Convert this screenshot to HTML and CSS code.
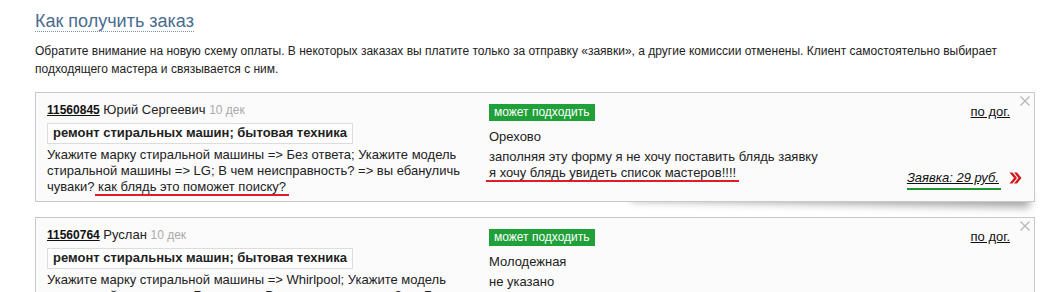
FILE: index.html
```html
<!DOCTYPE HTML>
<html lang="ru">
<head>
    <meta http-equiv="content-type" content="text/html; charset=utf-8">
    <title>Как получить заказ</title>
    <link rel="stylesheet" href="styles.css">
</head>
<body>
    <div class="page">
        <h1 class="title"><span class="title__text">Как получить заказ</span></h1>
        <p class="intro">Обратите внимание на новую схему оплаты. В некоторых заказах вы платите только за отправку «заявки», а другие комиссии отменены. Клиент самостоятельно выбирает подходящего мастера и связывается с ним.</p>

        <div class="order">
            <div class="order__main">
                <div class="order__head"><a class="order__id" href="#">11560845</a> Юрий Сергеевич <span class="order__date">10 дек</span></div>
                <div class="order__cat">ремонт стиральных машин; бытовая техника</div>
                <div class="order__desc">Укажите марку стиральной машины =&gt; Без ответа; Укажите модель стиральной машины =&gt; LG; В чем неисправность? =&gt; вы ебануличь чуваки? <span class="mark">как блядь это поможет поиску?</span></div>
            </div>
            <div class="order__info">
                <span class="badge">может подходить</span>
                <div class="order__place">Орехово</div>
                <div class="order__note">заполняя эту форму я не хочу поставить блядь заявку<br><span class="mark">я хочу блядь увидеть список мастеров!!!!</span></div>
            </div>
            <div class="order__side">
                <a class="order__price" href="#">по дог.</a>
                <div class="order__bid">
                    <a class="order__bid-link" href="#">Заявка: 29 руб.</a>
                    <svg class="chevron" width="13" height="12" viewBox="0 0 13 12"><path d="M0.5 0.5 L5 6 L0.5 11.5 L3.5 11.5 L8 6 L3.5 0.5 Z M5 0.5 L9.5 6 L5 11.5 L8 11.5 L12.5 6 L8 0.5 Z" fill="#d4161b"/></svg>
                </div>
            </div>
            <svg class="order__close" width="10" height="10" viewBox="0 0 10 10"><path d="M0.5 0.5 L9.5 9.5 M9.5 0.5 L0.5 9.5" stroke="#b4b4b4" stroke-width="1.2"/></svg>
        </div>

        <div class="order">
            <div class="order__main">
                <div class="order__head"><a class="order__id" href="#">11560764</a> Руслан <span class="order__date">10 дек</span></div>
                <div class="order__cat">ремонт стиральных машин; бытовая техника</div>
                <div class="order__desc">Укажите марку стиральной машины =&gt; Whirlpool; Укажите модель стиральной машины =&gt; Без ответа; В чем неисправность? =&gt; Без ответа</div>
            </div>
            <div class="order__info">
                <span class="badge">может подходить</span>
                <div class="order__place">Молодежная</div>
                <div class="order__note">не указано</div>
            </div>
            <div class="order__side">
                <a class="order__price" href="#">по дог.</a>
            </div>
            <svg class="order__close" width="10" height="10" viewBox="0 0 10 10"><path d="M0.5 0.5 L9.5 9.5 M9.5 0.5 L0.5 9.5" stroke="#b4b4b4" stroke-width="1.2"/></svg>
        </div>
    </div>
</body>
</html>
```

FILE: styles.css
```css
:root {
    --text: rgb(34, 34, 34);
    --title-blue: rgb(74, 108, 143);
    --card-bg: rgb(251, 251, 251);
    --card-border: rgb(200, 200, 200);
    --cat-border: rgb(220, 220, 220);
    --date-gray: rgb(170, 170, 170);
    --badge-green: rgb(31, 160, 56);
    --mark-red: rgb(224, 28, 40);
    --mark-green: rgb(30, 150, 45);
}

html, body {
    margin: 0;
    padding: 0;
    background: #fff;
    font-family: "Liberation Sans", Arial, sans-serif;
    color: var(--text);
}

.page {
    position: relative;
    z-index: 0;
    width: 1000px;
    padding: 10px 0 0 35px;
}

.title {
    margin: 0;
    font-size: 18px;
    font-weight: normal;
    line-height: 22px;
}

.title__text {
    color: var(--title-blue);
    border-bottom: 1px dotted rgb(120, 150, 180);
}

.intro {
    margin: 10px 0 0;
    font-size: 12px;
    line-height: 18px;
}

.order {
    position: relative;
    display: flex;
    margin-top: 14px;
    padding: 9px 12px 6px 11px;
    background: var(--card-bg);
    border: 1px solid var(--card-border);
    font-size: 13px;
    line-height: 16px;
}

.order + .order {
    margin-top: 15px;
}

/* lifted shadow under the right corner */
.order::after {
    content: "";
    position: absolute;
    z-index: -1;
    right: 4px;
    bottom: 6px;
    width: 40%;
    height: 16px;
    box-shadow: 0 9px 9px rgba(0, 0, 0, 0.35);
    transform: rotate(1deg);
}

.order__main {
    width: 430px;
    flex: none;
}

.order__id {
    color: #111;
    font-weight: bold;
    font-size: 12px;
}

.order__date {
    color: var(--date-gray);
    font-size: 12px;
}

.order__cat {
    display: inline-block;
    margin-top: 5px;
    padding: 1px 5px 2px;
    background: #fff;
    border: 1px solid var(--cat-border);
    font-weight: bold;
}

.order__desc {
    margin-top: 3px;
}

.order__info {
    flex: 1;
    margin-left: 12px;
}

.badge {
    display: inline-block;
    padding: 1px 5px;
    margin-top: 2px;
    background: var(--badge-green);
    color: #fff;
    font-size: 12px;
    line-height: 15px;
}

.order__place {
    margin-top: 8px;
}

.order__note {
    margin-top: 4px;
    line-height: 16px;
}

.mark {
    padding: 0 3px;
    margin: 0 -3px;
    border-bottom: 2px solid var(--mark-red);
}

.order__side {
    display: flex;
    flex-direction: column;
    justify-content: space-between;
    align-items: flex-end;
}

.order__price {
    margin: 2px 12px 0 0;
    color: #111;
    font-size: 13px;
}

.order__bid {
    display: flex;
    align-items: center;
    gap: 8px;
    margin-bottom: 5px;
}

.order__bid-link {
    padding: 0 2px 3px 0;
    color: #111;
    font-style: italic;
    font-size: 13px;
    line-height: 15px;
    border-bottom: 2px solid var(--mark-green);
}

.chevron {
    display: block;
    margin-top: -4px;
}

.order__close {
    position: absolute;
    top: 3px;
    right: 4px;
}
```
